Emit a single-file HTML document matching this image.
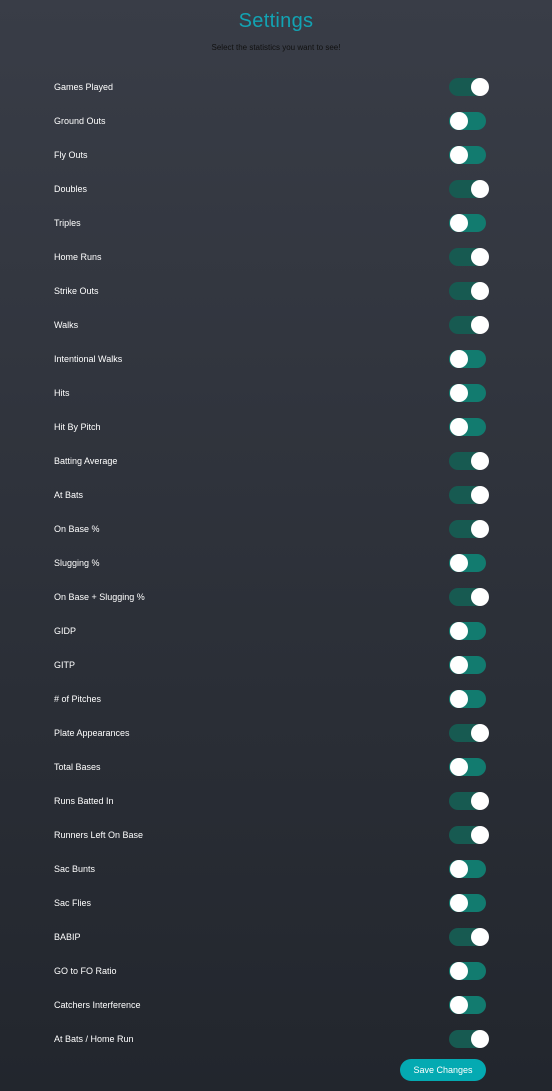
<!DOCTYPE html>
<html><head><style>
body{margin:0;width:552px;height:1091px;background:linear-gradient(#393d47,#22262d);font-family:"Liberation Sans",sans-serif;position:relative;overflow:hidden}
h1{position:absolute;top:10px;left:0;width:552px;text-align:center;margin:0;font-weight:normal;font-size:20px;color:#12a3b3;letter-spacing:0.3px}
.sub{position:absolute;top:43px;width:552px;text-align:center;font-size:8px;color:#111}
.row{position:absolute;left:54px;width:440px;height:20px}
.row span{position:absolute;left:0;top:5px;font-size:9px;color:#fff}
.t{position:absolute;left:395px;top:1px;width:37px;height:18px;border-radius:9px;background:#127b6f}
.t::after{content:"";position:absolute;top:0;left:1px;width:18px;height:18px;border-radius:50%;background:#fff}
.t.on{background:#175a51}
.t.on::after{left:22px}
.btn{position:absolute;left:400px;top:1059px;width:86px;height:22px;border-radius:11px;background:#04aab2;color:#fff;font-size:9px;text-align:center;line-height:22px}
</style></head><body>
<h1>Settings</h1>
<div class="sub">Select the statistics you want to see!</div>
<div class="row" style="top:77px"><span>Games Played</span><div class="t on"></div></div>
<div class="row" style="top:111px"><span>Ground Outs</span><div class="t"></div></div>
<div class="row" style="top:145px"><span>Fly Outs</span><div class="t"></div></div>
<div class="row" style="top:179px"><span>Doubles</span><div class="t on"></div></div>
<div class="row" style="top:213px"><span>Triples</span><div class="t"></div></div>
<div class="row" style="top:247px"><span>Home Runs</span><div class="t on"></div></div>
<div class="row" style="top:281px"><span>Strike Outs</span><div class="t on"></div></div>
<div class="row" style="top:315px"><span>Walks</span><div class="t on"></div></div>
<div class="row" style="top:349px"><span>Intentional Walks</span><div class="t"></div></div>
<div class="row" style="top:383px"><span>Hits</span><div class="t"></div></div>
<div class="row" style="top:417px"><span>Hit By Pitch</span><div class="t"></div></div>
<div class="row" style="top:451px"><span>Batting Average</span><div class="t on"></div></div>
<div class="row" style="top:485px"><span>At Bats</span><div class="t on"></div></div>
<div class="row" style="top:519px"><span>On Base %</span><div class="t on"></div></div>
<div class="row" style="top:553px"><span>Slugging %</span><div class="t"></div></div>
<div class="row" style="top:587px"><span>On Base + Slugging %</span><div class="t on"></div></div>
<div class="row" style="top:621px"><span>GIDP</span><div class="t"></div></div>
<div class="row" style="top:655px"><span>GITP</span><div class="t"></div></div>
<div class="row" style="top:689px"><span># of Pitches</span><div class="t"></div></div>
<div class="row" style="top:723px"><span>Plate Appearances</span><div class="t on"></div></div>
<div class="row" style="top:757px"><span>Total Bases</span><div class="t"></div></div>
<div class="row" style="top:791px"><span>Runs Batted In</span><div class="t on"></div></div>
<div class="row" style="top:825px"><span>Runners Left On Base</span><div class="t on"></div></div>
<div class="row" style="top:859px"><span>Sac Bunts</span><div class="t"></div></div>
<div class="row" style="top:893px"><span>Sac Flies</span><div class="t"></div></div>
<div class="row" style="top:927px"><span>BABIP</span><div class="t on"></div></div>
<div class="row" style="top:961px"><span>GO to FO Ratio</span><div class="t"></div></div>
<div class="row" style="top:995px"><span>Catchers Interference</span><div class="t"></div></div>
<div class="row" style="top:1029px"><span>At Bats / Home Run</span><div class="t on"></div></div>
<div class="btn">Save Changes</div>
</body></html>
